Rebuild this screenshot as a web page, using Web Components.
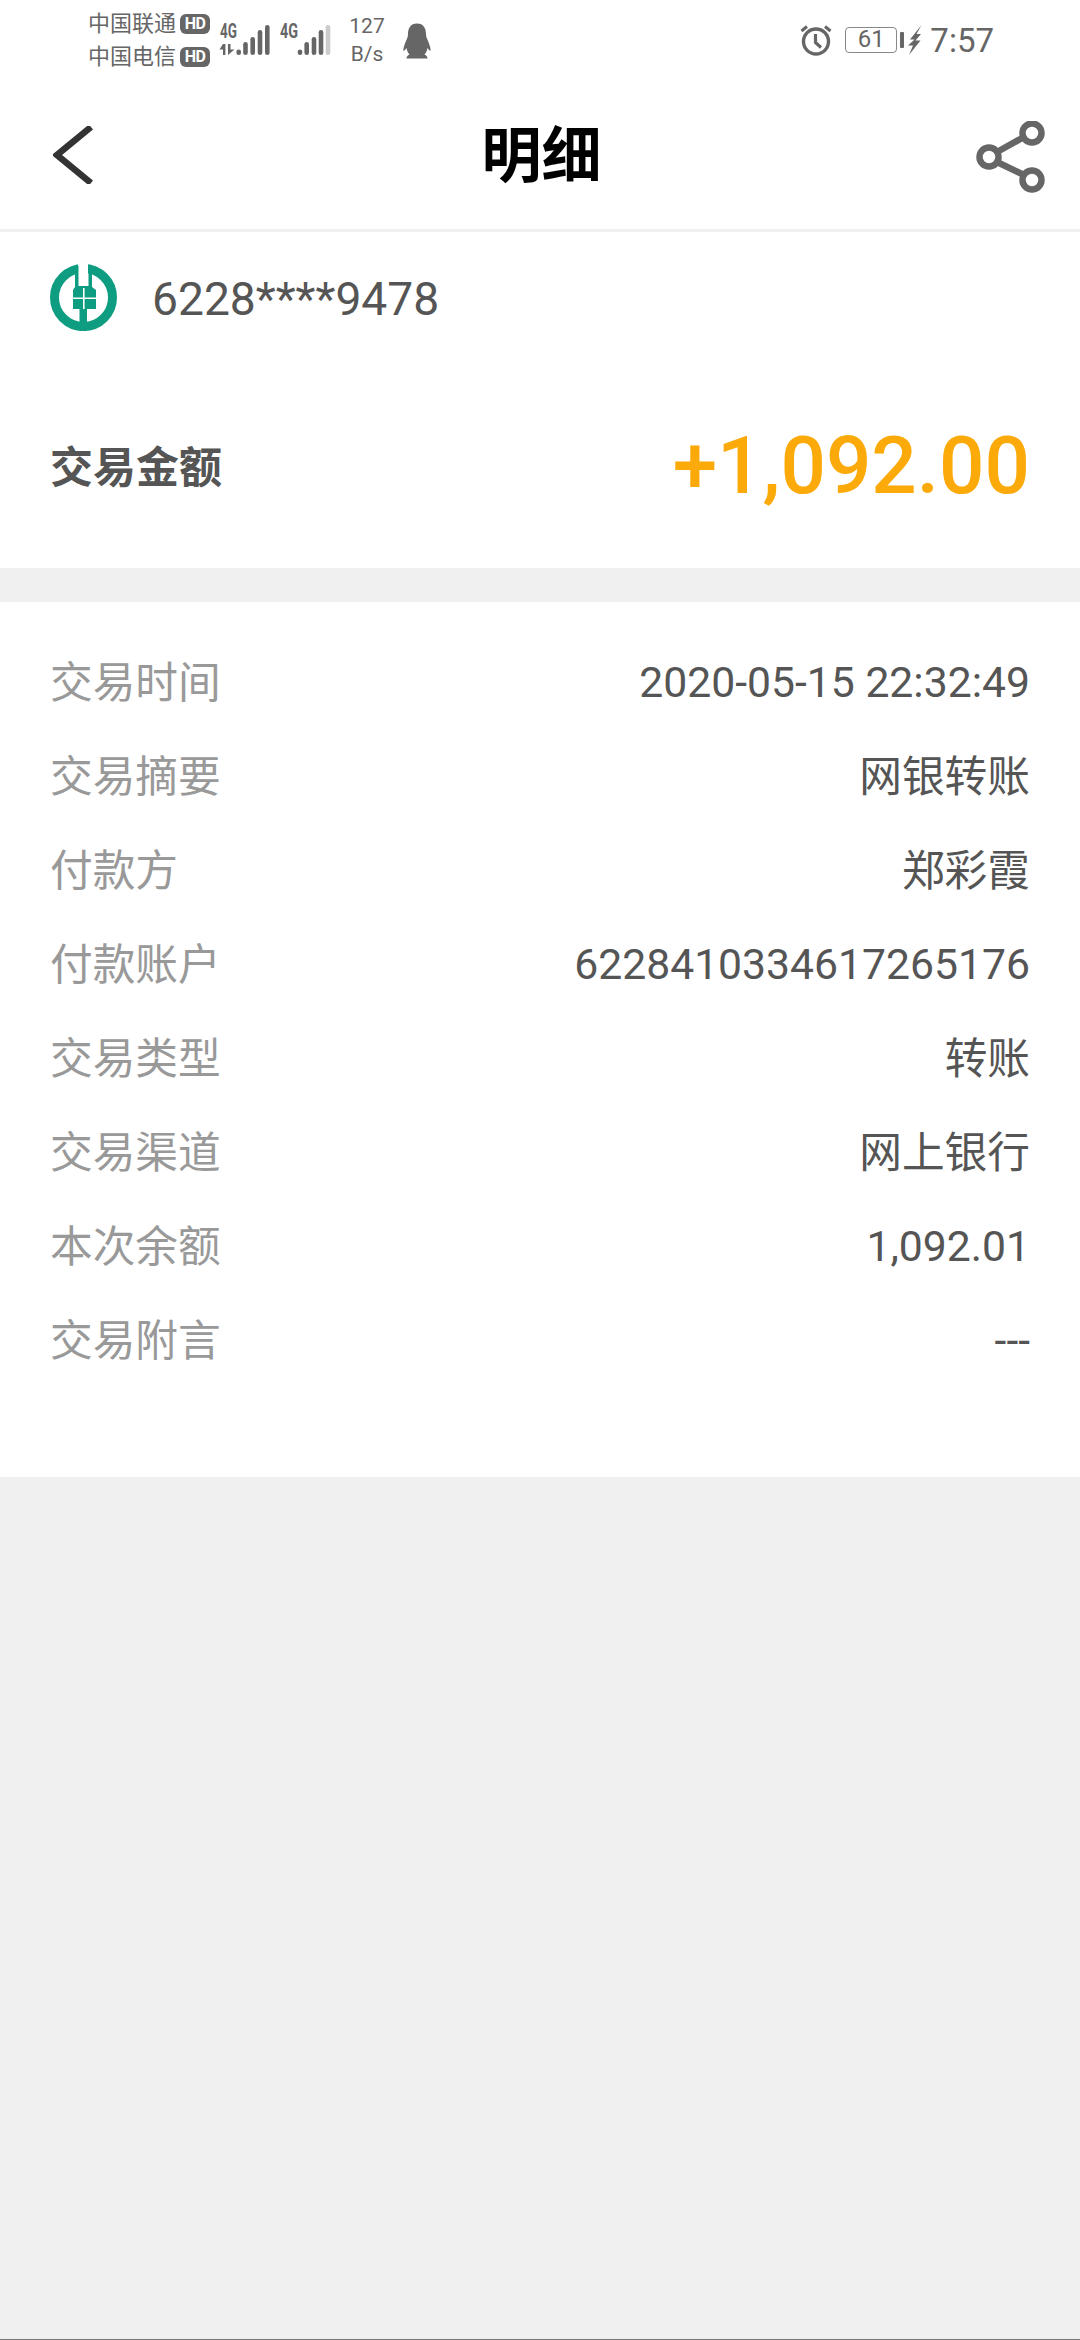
<!DOCTYPE html>
<html lang="zh"><head><meta charset="utf-8">
<style>
html,body{margin:0;padding:0;background:#f0f0f0}
body{width:1080px;height:2340px;overflow:hidden;display:flex;flex-direction:column;font-family:Roboto,"Noto Sans CJK SC",sans-serif}
page-fill{flex:1}
</style></head><body>
<status-bar></status-bar>
<nav-header title-text="明细"></nav-header>
<account-card number="6228****9478" label="交易金额" amount="+1,092.00"></account-card>
<detail-list>
<detail-row label="交易时间" value="2020-05-15 22:32:49"></detail-row>
<detail-row label="交易摘要" value="网银转账"></detail-row>
<detail-row label="付款方" value="郑彩霞"></detail-row>
<detail-row label="付款账户" value="6228410334617265176"></detail-row>
<detail-row label="交易类型" value="转账"></detail-row>
<detail-row label="交易渠道" value="网上银行"></detail-row>
<detail-row label="本次余额" value="1,092.01"></detail-row>
<detail-row label="交易附言" value="---"></detail-row>
</detail-list>
<page-fill></page-fill>
<home-line></home-line>
<script>
const FONT='Roboto,"Noto Sans CJK SC",sans-serif';
function def(name,html){
  customElements.define(name,class extends HTMLElement{
    connectedCallback(){
      if(this.shadowRoot)return;
      const r=this.attachShadow({mode:'open'});
      r.innerHTML=typeof html==='function'?html(this):html;
    }
  });
}
const bar=(cx,top,c)=>`<rect x="${cx-2.3}" y="${top}" width="4.6" height="${33-top}" rx="2.3" fill="${c||'#666'}"/>`;
def('status-bar',`<style>
:host{display:flex;height:80px;box-sizing:border-box;background:#fff;color:#666;align-items:center;padding:0 0 0 88px;font-family:${FONT}}
.car{display:flex;flex-direction:column;gap:11px;width:130px;margin-top:1px}
.l{display:flex;align-items:center;gap:4px;font-size:22px;line-height:22px;white-space:nowrap}
.hd{width:30px;height:20px;border-radius:6px;background:#666;color:#fff;font:700 16px/20px Roboto,sans-serif;text-align:center;letter-spacing:-.5px}
.sig{display:block;flex:none}
.rate{width:40px;margin-left:13px;font-size:21px;line-height:28px;text-align:center}
.qq{margin-left:16px;flex:none;margin-top:1px}
.sp{flex:1}
.r{display:flex;align-items:center;margin-right:86px}
.bat{width:52px;height:26px;box-sizing:border-box;border:1.5px solid #888;border-radius:4px;font-size:24px;line-height:23px;text-align:center;margin-left:13px}
.nub{width:4px;height:16px;background:#666;border-radius:1px;margin-left:3px}
.t{font-size:33px;line-height:38px;margin-left:8px;margin-top:1px}
.bolt{margin-left:4px}
svg text{font-family:Roboto,sans-serif}
</style>
<div class="car"><div class="l">中国联通<span class="hd">HD</span></div><div class="l">中国电信<span class="hd">HD</span></div></div>
<svg class="sig" width="116" height="52" viewBox="0 -8 116 52">
<text x="2" y="16" font-size="20" font-weight="700" fill="#666" textLength="17" lengthAdjust="spacingAndGlyphs">4G</text>
<path fill="#666" d="M5 22v11H7.400V22zM5 22L1.500 27.500H5zM10 22v11L16.500 27.500H12.500V22z"/>
${bar(20.7,27.5)}${bar(27.5,20)}${bar(34.7,15)}${bar(42,8)}${bar(49.3,3)}
<text x="62" y="16" font-size="20" font-weight="700" fill="#666" textLength="18" lengthAdjust="spacingAndGlyphs">4G</text>
${bar(82,27.5)}${bar(88.7,20)}${bar(96,15)}${bar(103,8)}${bar(110,3,'#ccc')}
</svg>
<div class="rate">127<br>B/s</div>
<svg class="qq" width="28" height="36" viewBox="0 0 28 36"><path fill="#666" d="M14 0.500C20.500 0.500 23 5.500 23 11C23 14 24 15.500 25 18C26.500 21.500 28 26 27.500 28C26.500 27.500 25.500 26.500 24.500 25C24 28 23 30 21.500 31.500C23.500 32.500 24.500 33.500 24.500 35.500H3.500C3.500 33.500 4.500 32.500 6.500 31.500C5 30 4 28 3.500 25C2.500 26.500 1.500 27.500 0.500 28C0 26 1.500 21.500 3 18C4 15.500 5 14 5 11C5 5.500 7.500 0.500 14 0.500Z"/></svg>
<div class="sp"></div>
<div class="r">
<svg width="32" height="32" viewBox="0 0 32 32"><g fill="none" stroke="#666"><circle cx="16" cy="17.500" r="12.500" stroke-width="3.400"/><path d="M15.500 10v8.500l5.500 5" stroke-width="3.200"/><path d="M1.500 7L7 2.500M30.500 7L25 2.500" stroke-width="3"/></g></svg>
<div class="bat">61</div><div class="nub"></div>
<svg class="bolt" width="14" height="30" viewBox="0 0 14 30"><path fill="#666" d="M13.500 0L2 14.500H6.500L0 20.500H5L1 30L12.500 15.500H7.500L13 9H8.500Z"/></svg>
<div class="t">7:57</div>
</div>`);
def('nav-header',h=>`<style>
:host{display:block;background:#fff;border-bottom:3px solid #f0f0f0}
.b{height:149px;display:grid;grid-template-columns:1fr auto 1fr;align-items:center;padding:0 34px 0 53px;box-sizing:border-box}
.t{font:700 60px/1 "Noto Sans CJK SC",sans-serif;color:#000;text-align:center;margin:0 0 8px -16px}
svg{display:block}
.s{justify-self:end;margin-top:4px}
</style><div class="b">
<svg width="40" height="58" viewBox="0 0 40 58"><path d="M38 1L4 29l34 28" fill="none" stroke="#333" stroke-width="6.500" stroke-linejoin="miter"/></svg>
<div class="t">${h.getAttribute('title-text')}</div>
<svg class="s" width="70" height="72" viewBox="0 0 70 72" fill="none" stroke="#666" stroke-width="6.500"><circle cx="13" cy="36" r="9.500"/><circle cx="56" cy="12" r="9.500"/><circle cx="56" cy="59" r="9.500"/><path d="M21 31L48 16M21 41L48 54"/></svg>
</div>`);
def('account-card',h=>`<style>
:host{display:block;background:#fff;font-family:${FONT};height:336px;padding:0 50px;box-sizing:border-box}
.top{display:flex;align-items:center;gap:35px;padding-top:32px;height:67px}
.num{font-size:46.2px;color:#555;line-height:70px;padding-top:2px}
svg{display:block;flex:none}
.amt{display:flex;justify-content:space-between;align-items:center;margin-top:83px;height:100px}
.lab{font:700 43px/1 "Noto Sans CJK SC",sans-serif;color:#555}
.val{font-size:80px;font-weight:500;color:#fca90a;line-height:100px;padding-top:4px}
</style>
<div class="top"><svg width="67" height="67" viewBox="0 0 67 67">
<circle cx="33.500" cy="33.500" r="29" fill="none" stroke="#0f9d82" stroke-width="9"/>
<path fill="#fff" d="M28 0h10v24H28z"/>
<path fill="#0f9d82" d="M25 2h3.500v20h10V2H42v21l4 3v19H37v22H29.500V45H23V26l2-3z"/>
<path fill="#fff" d="M23 33.500h23v1.600H23zM33 24h1.600v21H33z"/>
</svg><div class="num">${h.getAttribute('number')}</div></div>
<div class="amt"><div class="lab">${h.getAttribute('label')}</div><div class="val">${h.getAttribute('amount')}</div></div>`);
def('detail-list',`<style>
:host{display:block;background:#fff;margin-top:34px;padding:33px 50px 90px}
</style><slot></slot>`);
def('detail-row',h=>{
  const v=h.getAttribute('value');
  const cjk=/[^\x00-\x7f]/.test(v);
  return `<style>
:host{display:flex;justify-content:space-between;align-items:center;height:94px;font-size:42.7px;font-family:${FONT}}
.l{color:#999;padding-bottom:7px}.v{color:#555}.v.c{padding-bottom:7px}
</style><div class="l">${h.getAttribute('label')}</div><div class="v${cjk?' c':''}">${v}</div>`;
});
def('page-fill',`<style>:host{display:block}</style>`);
def('home-line',`<style>:host{display:block;height:1px;background:#777}</style>`);
</script>
</body></html>
